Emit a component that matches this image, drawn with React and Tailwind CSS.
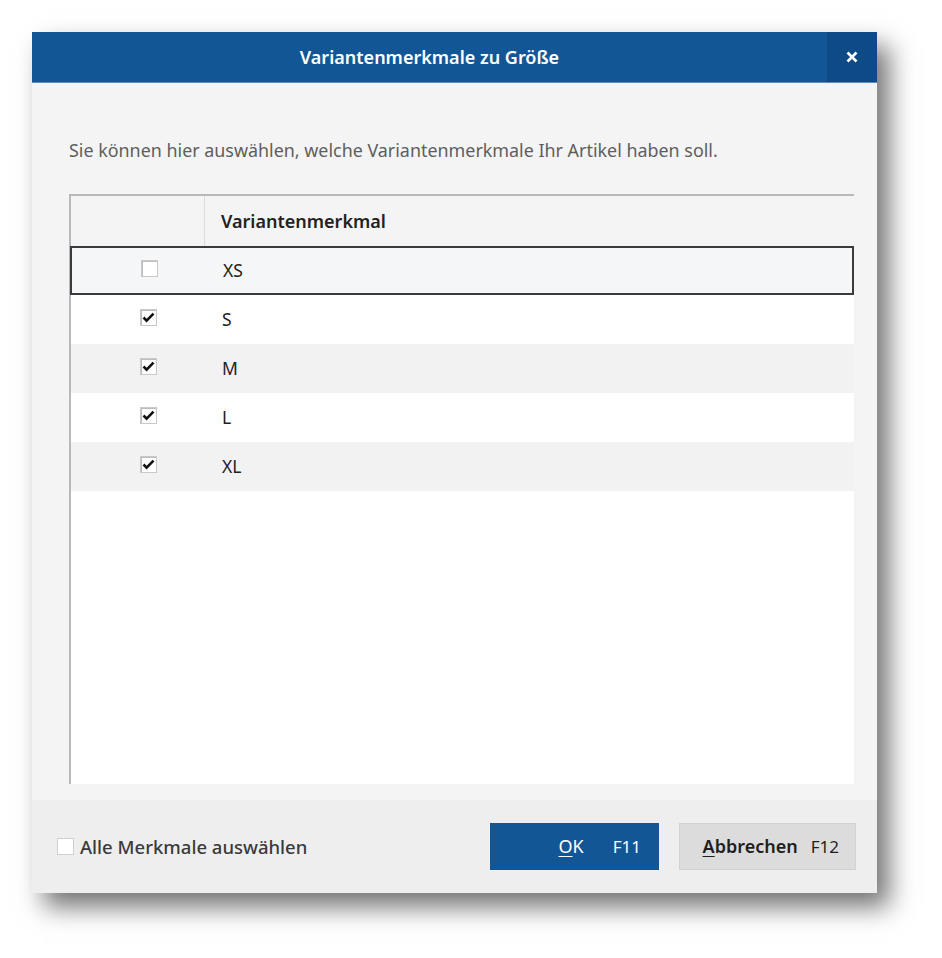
import React, { useState } from 'react';

const rows = [
  { label: 'XS', checked: false },
  { label: 'S', checked: true },
  { label: 'M', checked: true },
  { label: 'L', checked: true },
  { label: 'XL', checked: true },
];

const Box = ({ checked }) => (
  <span className="flex h-[17px] w-[17px] items-start justify-start border border-[#c9c9c9] bg-white pl-[1px] pt-[2px] shadow-[inset_1px_1px_0_#bdbdbd]">
    {checked && (
      <svg width="13" height="11" viewBox="0 0 13 11">
        <path d="M1.5 5.5 L4.6 8.6 L11.5 1.6" fill="none" stroke="#111" strokeWidth="2.6" />
      </svg>
    )}
  </span>
);

export default function App() {
  const [items, setItems] = useState(rows);
  const [selected, setSelected] = useState(0);

  const toggle = (i) =>
    setItems((prev) => prev.map((r, j) => (j === i ? { ...r, checked: !r.checked } : r)));

  return (
    <div className="h-[958px] w-[942px] bg-white pl-[32px] pt-[32px]" style={{ fontFamily: '"Noto Sans", "Open Sans", sans-serif' }}>
      <div className="flex h-[861px] w-[845px] flex-col bg-[#f4f4f4] shadow-[12px_14px_24px_rgba(0,0,0,0.55)]">
        {/* title bar */}
        <div className="flex h-[51px] shrink-0 border-b border-[#5d8bbd] bg-[#125696]">
          <div className="flex flex-1 items-center justify-center text-[18px] font-semibold text-white">
            Variantenmerkmale zu Größe
          </div>
          <div className="flex w-[50px] items-center justify-center bg-[#0e4a86]">
            <svg width="12" height="12" viewBox="0 0 12 12">
              <path d="M1.5 1.5 L10.5 10.5 M10.5 1.5 L1.5 10.5" stroke="white" strokeWidth="2.6" />
            </svg>
          </div>
        </div>

        {/* body */}
        <div className="flex flex-1 flex-col pl-[37px] pr-[23px] pb-[16px]">
          <p className="mt-[52px] h-[30px] text-[17.9px] leading-[30px] text-[#5e5e5e]">
            Sie können hier auswählen, welche Variantenmerkmale Ihr Artikel haben soll.
          </p>
          <div className="mt-[29px] flex flex-1 flex-col border-l-2 border-t-2 border-[#b9b9b9] bg-white">
            <div className="flex h-[50px] shrink-0 bg-[#f4f4f4] text-[18px] font-semibold text-[#222]">
              <div className="w-[134px] border-r border-[#dcdcdc]" />
              <div className="flex items-center pl-[16px]">Variantenmerkmal</div>
            </div>
            {items.map((r, i) => (
              <div
                key={r.label}
                onClick={() => setSelected(i)}
                className={
                  'flex h-[49px] shrink-0 items-center text-[17.5px] text-[#222] ' +
                  (i === selected
                    ? 'ml-[-1px] border-2 border-[#3a3a3a] bg-[#f5f6f7]'
                    : i % 2 === 0
                    ? 'bg-[#f2f2f2]'
                    : 'bg-white')
                }
              >
                <div className="flex w-[134px] justify-center pb-[4px] pl-[20px]" onClick={() => toggle(i)}>
                  <Box checked={r.checked} />
                </div>
                <div className="pl-[17px]">{r.label}</div>
              </div>
            ))}
          </div>
        </div>

        {/* footer */}
        <div className="flex h-[93px] shrink-0 items-center bg-[#eeeeee] pl-[25px] pr-[21px]">
          <label className="flex items-center gap-[6px] text-[18.5px] font-medium text-[#3a3a3a]">
            <span className="h-[17px] w-[17px] border border-[#cfcfcf] bg-white" />
            Alle Merkmale auswählen
          </label>
          <div className="ml-auto flex gap-[20px]">
            <button className="flex h-[47px] w-[169px] items-center justify-end gap-[29px] bg-[#125696] pr-[18px] text-[18px] text-white">
              <span>
                <span className="underline underline-offset-[3px]">O</span>K
              </span>
              <span className="text-[17px]">F11</span>
            </button>
            <button className="flex h-[47px] w-[177px] items-center justify-end gap-[13px] border border-[#d2d2d2] bg-[#dcdcdc] pr-[16px] text-[18px] text-[#1f1f1f]">
              <span className="font-semibold">
                <span className="underline underline-offset-[3px]">A</span>bbrechen
              </span>
              <span className="text-[17px]">F12</span>
            </button>
          </div>
        </div>
      </div>
    </div>
  );
}
